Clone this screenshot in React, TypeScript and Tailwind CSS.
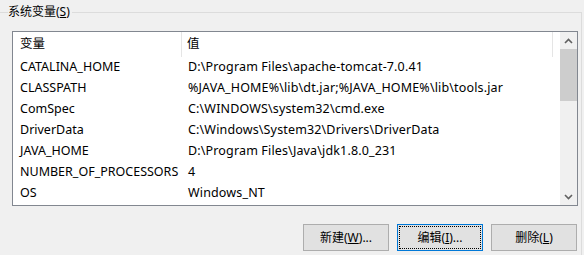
const rows: [string, string][] = [
  ["CATALINA_HOME", "D:\\Program Files\\apache-tomcat-7.0.41"],
  ["CLASSPATH", "%JAVA_HOME%\\lib\\dt.jar;%JAVA_HOME%\\lib\\tools.jar"],
  ["ComSpec", "C:\\WINDOWS\\system32\\cmd.exe"],
  ["DriverData", "C:\\Windows\\System32\\Drivers\\DriverData"],
  ["JAVA_HOME", "D:\\Program Files\\Java\\jdk1.8.0_231"],
  ["NUMBER_OF_PROCESSORS", "4"],
  ["OS", "Windows_NT"],
];

const Chevron = ({ down }: { down?: boolean }) => (
  <svg width="9" height="6" viewBox="0 0 9 6">
    <path
      d={down ? "M1 1 L4.5 4.5 L8 1" : "M1 5 L4.5 1.5 L8 5"}
      fill="none"
      stroke="#606060"
      strokeWidth="1.6"
    />
  </svg>
);

const Btn = ({ label, k, rest, focus }: { label: string; k: string; rest: string; focus?: boolean }) => (
  <button
    className={
      focus
        ? "w-[86px] h-[27px] bg-[#e1e1e1] border border-[#0078d7] outline-1 outline-dotted outline-black outline-offset-[-3px] text-[12px] text-black"
        : "w-[86px] h-[27px] bg-[#e1e1e1] border border-[#adadad] text-[12px] text-black"
    }
  >
    {label}(<span className="underline">{k}</span>){rest}
  </button>
);

export default function App() {
  return (
    <div
      className="w-[584px] h-[255px] bg-[#f0f0f0] overflow-hidden pt-[12px] text-black"
      style={{ fontFamily: '"Noto Sans", "Noto Sans CJK SC", sans-serif' }}
    >
      <div className="relative w-[582px] h-[260px] border-t border-r border-[#dcdcdc]">
        <span className="absolute left-[8px] top-[-9px] bg-[#f0f0f0] pr-[2px] text-[12px] leading-[16px]">
          系统变量(<span className="underline">S</span>)
        </span>

        <div className="ml-[12px] mt-[18px] w-[566px] h-[175px] border border-[#828790] bg-white flex">
          <div className="flex-1 flex flex-col text-[12.5px]">
            <div className="flex h-[25px] items-center">
              <div className="w-[169px] h-full pl-[7px] flex items-center border-r border-[#e5e5e5]">变量</div>
              <div className="w-[371px] h-full pl-[5px] flex items-center border-r border-[#e5e5e5]">值</div>
            </div>
            {rows.map(([n, v]) => (
              <div key={n} className="flex h-[21px] items-center whitespace-nowrap">
                <div className="w-[169px] pl-[7px]">{n}</div>
                <div className="pl-[6px] tracking-[0.15px]">{v}</div>
              </div>
            ))}
          </div>
          <div className="w-[17px] h-full bg-[#f0f0f0] flex flex-col">
            <div className="h-[17px] flex items-center justify-center">
              <Chevron />
            </div>
            <div className="h-[52px] bg-[#cdcdcd]" />
            <div className="flex-1" />
            <div className="h-[17px] flex items-center justify-center">
              <Chevron down />
            </div>
          </div>
        </div>

        <div className="flex justify-end gap-[8px] mt-[18px] pr-[4px]">
          <Btn label="新建" k="W" rest="..." />
          <Btn label="编辑" k="I" rest="..." focus />
          <Btn label="删除" k="L" rest="" />
        </div>
      </div>
    </div>
  );
}
